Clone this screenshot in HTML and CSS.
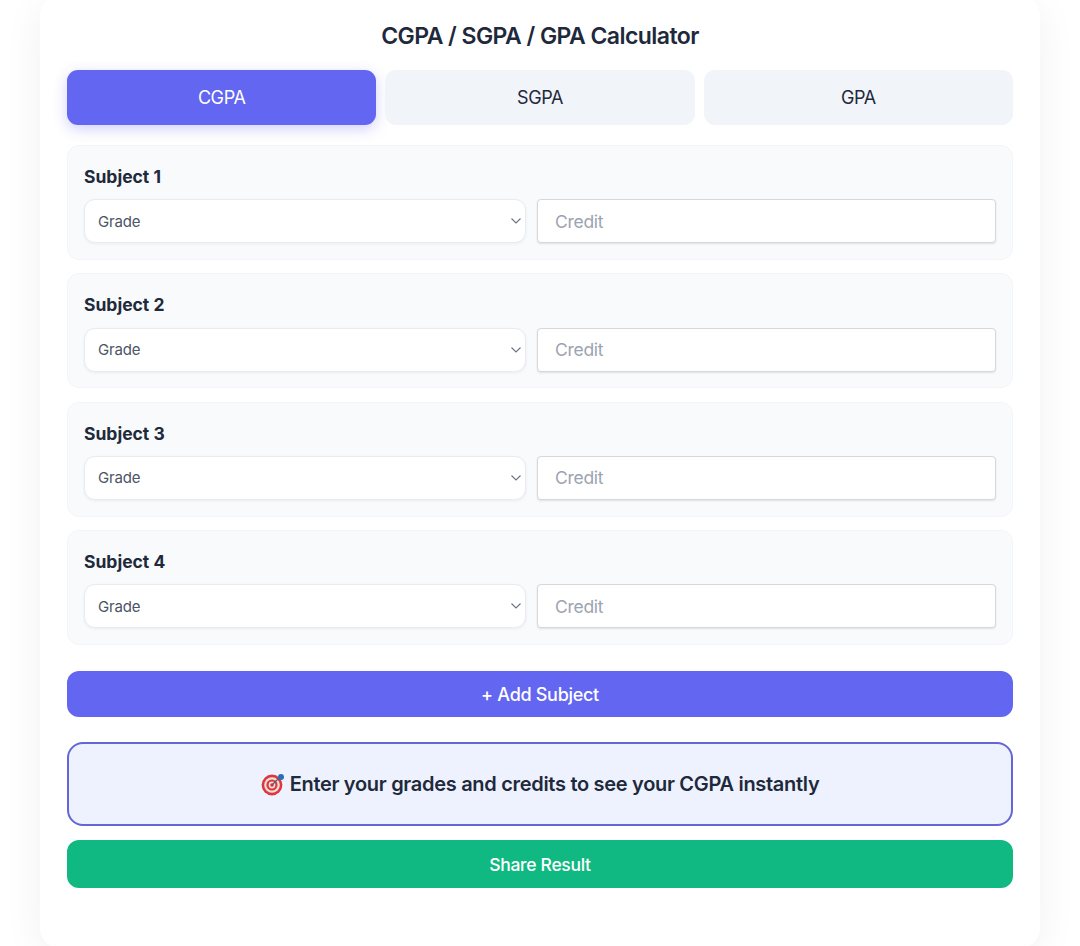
FILE: index.html
```html
<!DOCTYPE html>
<html lang="en">

<head>
    <meta charset="UTF-8">
    <meta name="viewport" content="width=device-width, initial-scale=1.0">
    <title>CGPA / SGPA / GPA Calculator</title>
    <link rel="stylesheet" href="styles.css">
</head>

<body>
    <div class="container">
        <h1>CGPA / SGPA / GPA Calculator</h1>

        <div class="tabs">
            <button class="tab active">CGPA</button>
            <button class="tab">SGPA</button>
            <button class="tab">GPA</button>
        </div>

        <div class="subject">
            <label>Subject 1</label>
            <div class="row">
                <select><option>Grade</option></select>
                <input type="number" placeholder="Credit">
            </div>
        </div>
        <div class="subject">
            <label>Subject 2</label>
            <div class="row">
                <select><option>Grade</option></select>
                <input type="number" placeholder="Credit">
            </div>
        </div>
        <div class="subject">
            <label>Subject 3</label>
            <div class="row">
                <select><option>Grade</option></select>
                <input type="number" placeholder="Credit">
            </div>
        </div>
        <div class="subject">
            <label>Subject 4</label>
            <div class="row">
                <select><option>Grade</option></select>
                <input type="number" placeholder="Credit">
            </div>
        </div>

        <button class="btn-add">+ Add Subject</button>

        <div class="result">
            <svg class="target" viewBox="0 0 24 24" width="24" height="24" aria-hidden="true">
                <circle cx="11" cy="13" r="10.4" fill="#d9383f"/>
                <circle cx="11" cy="13" r="7.8" fill="#f3dcd8"/>
                <circle cx="11" cy="13" r="5.6" fill="#d9383f"/>
                <circle cx="11" cy="13" r="3.4" fill="#f3dcd8"/>
                <circle cx="11" cy="13" r="1.8" fill="#d9383f"/>
                <path d="M11 13L20 4" stroke="#55606b" stroke-width="1.2"/>
                <circle cx="20" cy="5" r="3" fill="#2a6fb5"/>
            </svg>
            <span>Enter your grades and credits to see your CGPA instantly</span>
        </div>

        <button class="btn-share">Share Result</button>
    </div>
</body>

</html>
```

FILE: styles.css
```css
* {
    margin: 0;
    padding: 0;
    box-sizing: border-box;
}

html,
body {
    height: 946px;
    overflow: hidden;
}

body {
    font-family: Inter, "Liberation Sans", sans-serif;
    background: #fff;
    color: #1e293b;
}

.container {
    width: 1000px;
    height: 952px;
    margin: -4px auto 0;
    padding: 26px 27px 0;
    background: #fff;
    border-radius: 20px;
    box-shadow: 0 8px 40px rgba(30, 41, 59, 0.06);
}

h1 {
    font-size: 23px;
    font-weight: 600;
    line-height: 28px;
    letter-spacing: -0.55px;
    text-align: center;
    margin-bottom: 20px;
}

/* Tabs */
.tabs {
    display: flex;
    gap: 9px;
    margin-bottom: 20px;
}

.tab {
    flex: 1;
    height: 55px;
    border: none;
    border-radius: 11px;
    background: #f1f5f9;
    color: #1e293b;
    font-family: inherit;
    font-size: 18px;
    letter-spacing: -0.4px;
}

.tab.active {
    background: #6366f1;
    color: #fff;
    box-shadow: 0 4px 14px rgba(99, 102, 241, 0.3);
}

/* Subject cards */
.subject {
    height: 115px;
    padding: 20px 16px 0;
    margin-bottom: 13.3px;
    background: #f8fafc;
    border: 1px solid #f3f5f8;
    border-radius: 12px;
}

.subject label {
    display: block;
    font-size: 17.5px;
    font-weight: 700;
    line-height: 21px;
    margin-bottom: 12.4px;
}

.row {
    display: flex;
    gap: 11px;
}

select {
    appearance: none;
    width: 442px;
    height: 44px;
    padding: 0 13px;
    background: #fff url("data:image/svg+xml,%3Csvg xmlns='http://www.w3.org/2000/svg' width='12' height='8' viewBox='0 0 12 8'%3E%3Cpath d='M1.5 1.5L6 6l4.5-4.5' fill='none' stroke='%236b7280' stroke-width='1.1'/%3E%3C/svg%3E") no-repeat right 3px center;
    border: 1px solid #e8ecf1;
    border-radius: 11px;
    box-shadow: 0 1px 3px rgba(30, 41, 59, 0.06);
    color: #4b5563;
    font-family: inherit;
    font-size: 15px;
    letter-spacing: -0.2px;
    outline: none;
}

input {
    flex: 1;
    min-width: 0;
    height: 44px;
    padding: 0 17px;
    background: #fff;
    border: 1px solid #d5d9df;
    border-radius: 4px;
    box-shadow: 0 1px 2px rgba(30, 41, 59, 0.12);
    font-family: inherit;
    font-size: 17.5px;
    letter-spacing: -0.3px;
    outline: none;
}

input::placeholder {
    color: #9ca3af;
}

/* Buttons and result */
.btn-add,
.btn-share {
    display: block;
    width: 100%;
    border: none;
    border-radius: 12px;
    color: #fff;
    font-family: inherit;
    letter-spacing: -0.3px;
}

.btn-add {
    height: 46px;
    margin-top: 26.5px;
    background: #6366f1;
    font-size: 18px;
    font-weight: 500;
}

.result {
    display: flex;
    justify-content: center;
    align-items: center;
    gap: 5px;
    height: 84px;
    margin-top: 25px;
    background: #eef2ff;
    border: 2px solid #6366d8;
    border-radius: 16px;
    font-size: 20px;
    font-weight: 600;
    letter-spacing: -0.3px;
}

.btn-share {
    height: 48px;
    margin-top: 14px;
    background: #10b981;
    font-size: 17.5px;
    font-weight: 500;
}
```
